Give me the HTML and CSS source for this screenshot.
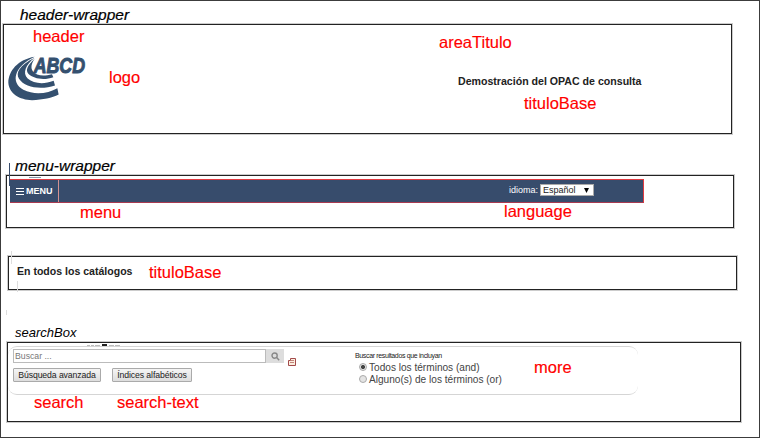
FILE: index.html
```
<!DOCTYPE html>
<html lang="es">
<head>
<meta charset="utf-8">
<title>OPAC ABCD</title>
<link rel="stylesheet" href="styles.css">
</head>
<body>
<main class="page">
  <h2 class="caption caption-header">header-wrapper</h2>
  <section class="box header-box">
    <svg class="logo" viewBox="0 0 234 134">
      <g fill="#34506f">
        <path d="M80 2C30 10 1 45 1 80C3 112 35 132 72 132C105 131 132 125 152 115L148 96C120 112 80 118 46 101C8 80 16 32 80 2Z"/>
        <path d="M80 5C34 28 22 50 33 68C50 95 100 102 141 88L137 74C105 86 77 82 59 67C42 50 54 25 80 5Z"/>
        <path d="M80 8C58 28 52 42 61 53C77 69 110 73 136 63L132 54C105 61 85 58 75 46C67 36 70 22 80 8Z"/>
        <text class="logo-text" x="77" y="50" textLength="154" lengthAdjust="spacingAndGlyphs">ABCD</text>
      </g>
    </svg>
    <h1 class="title">Demostración del OPAC de consulta</h1>
    <span class="note note-header">header</span>
    <span class="note note-logo">logo</span>
    <span class="note note-area">areaTitulo</span>
    <span class="note note-title">tituloBase</span>
  </section>

  <h2 class="caption caption-menu">menu-wrapper</h2>
  <section class="box menu-box">
    <i class="scrap scrap-menu"></i><i class="scrap scrap-logo"></i>
    <nav class="menu-bar">
      <a class="menu-button"><svg class="bars" viewBox="0 0 8 9"><path d="M0 1.5h8M0 4.5h8M0 7.5h8"/></svg>MENU</a>
      <div class="language">idioma: <span class="select">Español<svg viewBox="0 0 6 5"><path d="M0 0h5L2.5 5z"/></svg></span></div>
    </nav>
    <span class="note note-menu">menu</span>
    <span class="note note-language">language</span>
  </section>

  <section class="box base-box">
    <i class="scrap scrap-a"></i><i class="scrap scrap-b"></i><i class="scrap scrap-c"></i>
    <h3 class="base-title">En todos los catálogos</h3>
    <span class="note note-base">tituloBase</span>
  </section>

  <h2 class="caption caption-search">searchBox</h2>
  <section class="box search-box">
    <svg class="remnant" viewBox="0 0 34 3"><path stroke="#bbb" d="M0 1.5h3M4 1.5h3M8 1.5h5M22 1.5h5M28 1.5h5"/><path stroke="#222" stroke-width="2" d="M15 1h5"/></svg>
    <div class="panel">
      <div class="search-form">
        <div class="search-row">
          <div class="field">Buscar ...</div>
          <div class="go"><svg viewBox="0 0 9 9"><circle cx="3.6" cy="3.6" r="2.6"/><path d="M5.6 5.6L8.2 8.2"/></svg></div>
          <svg class="index-icon" viewBox="0 0 8 8"><path fill="#fbeee0" stroke="#a34b4b" d="M2.5.5h5v7h-7v-5h2z"/><path stroke="#b56a60" stroke-width=".8" d="M3 2.5h3M2 4.5h4"/></svg>
        </div>
        <div class="buttons"><span class="button advanced">Búsqueda avanzada</span><span class="button indexes">Índices alfabéticos</span></div>
      </div>
      <div class="options">
        <div class="legend">Buscar resultados que incluyan</div>
        <label class="option"><i class="radio checked"></i>Todos los términos (and)</label>
        <label class="option"><i class="radio"></i>Alguno(s) de los términos (or)</label>
      </div>
    </div>
    <span class="note note-more">more</span>
    <span class="note note-search">search</span>
    <span class="note note-text">search-text</span>
  </section>
</main>
</body>
</html>
```
FILE: styles.css
```
* { box-sizing: border-box; }
body { margin: 0; background: #fff; font-family: "Liberation Sans", Arial, sans-serif; color: #222; }
.page { width: 760px; height: 438px; border: 1px solid #3c3c3c; overflow: hidden; }
h1, h2, h3 { margin: 0; white-space: nowrap; }

.caption { font-weight: 400; font-style: italic; color: #000; line-height: 18px; height: 18px; }
.caption-header { margin: 5px 0 0 19px; font-size: 15.5px; -webkit-text-stroke: .2px #000; }
.caption-menu { margin: 23px 0 0 14px; font-size: 15.5px; -webkit-text-stroke: .2px #000; }
.caption-search { margin: 34px 0 0 14px; font-size: 13px; }

.box { position: relative; border: 1px solid #222; outline: 1px solid #ccc; }
.header-box { width: 729px; height: 110px; margin-left: 2px; display: flex; align-items: flex-start; }
.logo { width: 78px; height: 45px; margin: 31px 0 0 4px; flex: none; overflow: visible; }
.logo-text { font: italic bold 64px "Liberation Sans Narrow", "Liberation Sans", sans-serif; stroke: #34506f; stroke-width: 3px; }
.title { margin: 50px 0 0 372px; font-size: 10.6px; line-height: 13px; }

.menu-box { width: 728px; height: 53px; margin-left: 5px; padding: 3px 0 0 3px; }
.menu-bar { width: 634px; height: 24px; background: #374c6c; border: solid #e03a40; border-width: 1px 1px 1px 0; border-bottom-color: #a83a50; display: flex; color: #fff; }
.menu-button { width: 49px; border-right: 1px solid #d39292; padding-left: 6px; display: flex; align-items: center; gap: 2px; font-size: 9px; font-weight: 700; }
.bars { width: 8px; height: 9px; stroke: #fff; fill: none; stroke-width: 1; }
.language { margin-left: 450px; display: flex; align-items: center; font-size: 9px; gap: 2px; height: 20px; white-space: nowrap; }
.select { width: 54px; height: 12px; background: #fff; border: 1px solid #aaa; color: #222; display: flex; justify-content: space-between; align-items: center; padding: 0 3px 0 2px; }
.select svg { width: 6px; height: 5px; fill: #000; }

.base-box { width: 729px; height: 34px; margin: 28px 0 0 7px; padding: 8px 0 0 8px; }
.base-title { font-size: 10.55px; line-height: 13px; }

.search-box { width: 734px; height: 80px; margin-left: 6px; padding-top: 3px; }
.remnant { position: absolute; left: 79px; top: 1px; width: 34px; height: 3px; }
.panel { width: 630px; height: 49px; border: 1px solid #d5d5d5; border-width: 1px 0; border-radius: 9px; display: flex; }
.search-form { width: 347px; padding: 2px 0 0 5px; }
.search-row { display: flex; height: 14px; }
.field { width: 253px; border: 1px solid #bbb; font-size: 8.7px; line-height: 13px; color: #777; padding-left: 1px; }
.go { width: 18px; background: #ddd; display: flex; align-items: center; justify-content: center; }
.go svg { width: 9px; height: 9px; fill: none; stroke: #888; stroke-width: 1.4; }
.index-icon { width: 8px; height: 8px; margin: 9px 0 0 4px; fill: none; overflow: visible; }
.buttons { display: flex; gap: 11px; margin-top: 5px; }
.button { height: 14px; border: 1px solid #aaa; border-radius: 1px; background: linear-gradient(#f5f5f5, #ddd); font-size: 8.7px; letter-spacing: -.1px; line-height: 12px; text-align: center; white-space: nowrap; }
.advanced { width: 88px; }
.indexes { width: 80px; }
.options { padding-top: 4px; color: #444; white-space: nowrap; }
.legend { font-size: 7px; letter-spacing: -.35px; line-height: 10px; color: #222; }
.option { display: flex; align-items: center; gap: 2px; height: 12px; padding-left: 4px; font-size: 10.1px; }
.radio { width: 8px; height: 8px; border: 1px solid #aaa; border-radius: 50%; background: #e4e4e4; }
.checked { background: radial-gradient(circle, #444 0 1.6px, #e4e4e4 2.4px); }

.note { position: absolute; color: #f00; font-size: 16.5px; line-height: 18px; white-space: nowrap; -webkit-text-stroke: .15px #f00; }
.note-header { left: 29px; top: 2px; }
.note-logo { left: 105px; top: 43px; }
.note-area { left: 435px; top: 8px; }
.note-title { left: 520px; top: 69px; }
.note-menu { left: 73px; top: 27px; }
.note-language { left: 497px; top: 26px; }
.note-base { left: 140px; top: 6px; }
.note-more { left: 526px; top: 15px; }
.note-search { left: 26px; top: 50px; }
.note-text { left: 109px; top: 50px; }

.scrap { position: absolute; background: #ddd; width: 1px; }
.scrap-menu { left: 2px; top: -13px; height: 23px; background: #374c6c; }
.scrap-logo { left: 22px; top: 1px; width: 12px; height: 1px; background: #8796aa; }
.scrap-a { left: 2px; top: -6px; height: 13px; }
.scrap-b { left: 8px; top: 24px; height: 11px; }
.scrap-c { left: -3px; top: 53px; height: 5px; }
```
